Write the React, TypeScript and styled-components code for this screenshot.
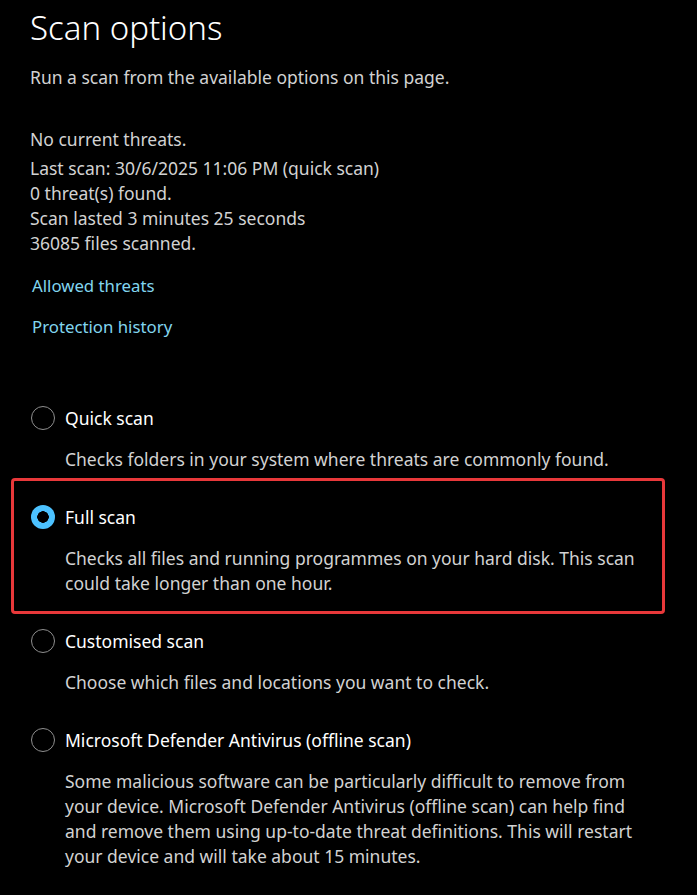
import React from "react";
import styled, { createGlobalStyle } from "styled-components";

const Global = createGlobalStyle`
  html, body { margin: 0; padding: 0; background: #000; }
  body { font-family: "Noto Sans", "Open Sans", sans-serif; color: #d4d4d4; }
`;

const Page = styled.div`
  width: 697px;
  height: 895px;
  box-sizing: border-box;
  padding: 8px 0 0 30px;
  background: #000;
  overflow: hidden;
`;

const Title = styled.h1`
  margin: 0;
  font-size: 33px;
  font-weight: 300;
  line-height: 40px;
  color: #fff;
`;

const Text = styled.p<{ $mt?: number }>`
  margin: ${(p) => p.$mt ?? 0}px 0 0;
  font-size: 17.5px;
  line-height: 25px;
  color: #d2d2d2;
`;

const Link = styled.a<{ $mt: number }>`
  display: block;
  width: max-content;
  margin: ${(p) => p.$mt}px 0 0 2px;
  font-size: 16.8px;
  line-height: 25px;
  color: #82d6ef;
  text-decoration: none;
`;

const Options = styled.div`
  display: flex;
  flex-direction: column;
  gap: 29px;
  margin-top: 63px;
`;

const Option = styled.div<{ $highlight?: boolean }>`
  position: relative;
  display: flex;
  flex-direction: column;
  gap: 13px;
  ${(p) =>
    p.$highlight &&
    `
    &::after {
      content: "";
      position: absolute;
      left: -19px;
      top: -23px;
      width: 654px;
      bottom: -18px;
      border: 3px solid #e8383a;
      border-radius: 4px;
      box-sizing: border-box;
      pointer-events: none;
    }
  `}
`;

const Row = styled.label`
  display: flex;
  align-items: center;
  gap: 10px;
  height: 32px;
  padding-left: 1px;
  font-size: 17.5px;
  color: #fff;
`;

const Radio = styled.span<{ $checked?: boolean }>`
  width: 24px;
  height: 24px;
  box-sizing: border-box;
  border-radius: 50%;
  flex: none;
  ${(p) =>
    p.$checked
      ? `background: radial-gradient(circle, #000 5.5px, #4cc2ff 6px);`
      : `border: 1.5px solid #8f8f8f;`}
`;

const Desc = styled.p`
  margin: 0 0 0 35px;
  font-size: 17.5px;
  line-height: 25px;
  color: #d2d2d2;
`;

const options = [
  {
    label: "Quick scan",
    desc: ["Checks folders in your system where threats are commonly found."],
  },
  {
    label: "Full scan",
    checked: true,
    desc: [
      "Checks all files and running programmes on your hard disk. This scan",
      "could take longer than one hour.",
    ],
  },
  {
    label: "Customised scan",
    desc: ["Choose which files and locations you want to check."],
  },
  {
    label: "Microsoft Defender Antivirus (offline scan)",
    desc: [
      "Some malicious software can be particularly difficult to remove from",
      "your device. Microsoft Defender Antivirus (offline scan) can help find",
      "and remove them using up-to-date threat definitions. This will restart",
      "your device and will take about 15 minutes.",
    ],
  },
];

export default function App() {
  return (
    <>
      <Global />
      <Page>
        <Title>Scan options</Title>
        <Text $mt={17}>Run a scan from the available options on this page.</Text>
        <Text $mt={37}>No current threats.</Text>
        <Text $mt={4}>
          Last scan: 30/6/2025 11:06 PM (quick scan)
          <br />0 threat(s) found.
          <br />Scan lasted 3 minutes 25 seconds
          <br />36085 files scanned.
        </Text>
        <Link $mt={17} href="#">Allowed threats</Link>
        <Link $mt={16} href="#">Protection history</Link>
        <Options>
          {options.map((o) => (
            <Option key={o.label} $highlight={o.checked}>
              <Row>
                <Radio $checked={o.checked} />
                {o.label}
              </Row>
              <Desc>
                {o.desc.map((l, i) => (
                  <React.Fragment key={i}>
                    {i > 0 && <br />}
                    {l}
                  </React.Fragment>
                ))}
              </Desc>
            </Option>
          ))}
        </Options>
      </Page>
    </>
  );
}
